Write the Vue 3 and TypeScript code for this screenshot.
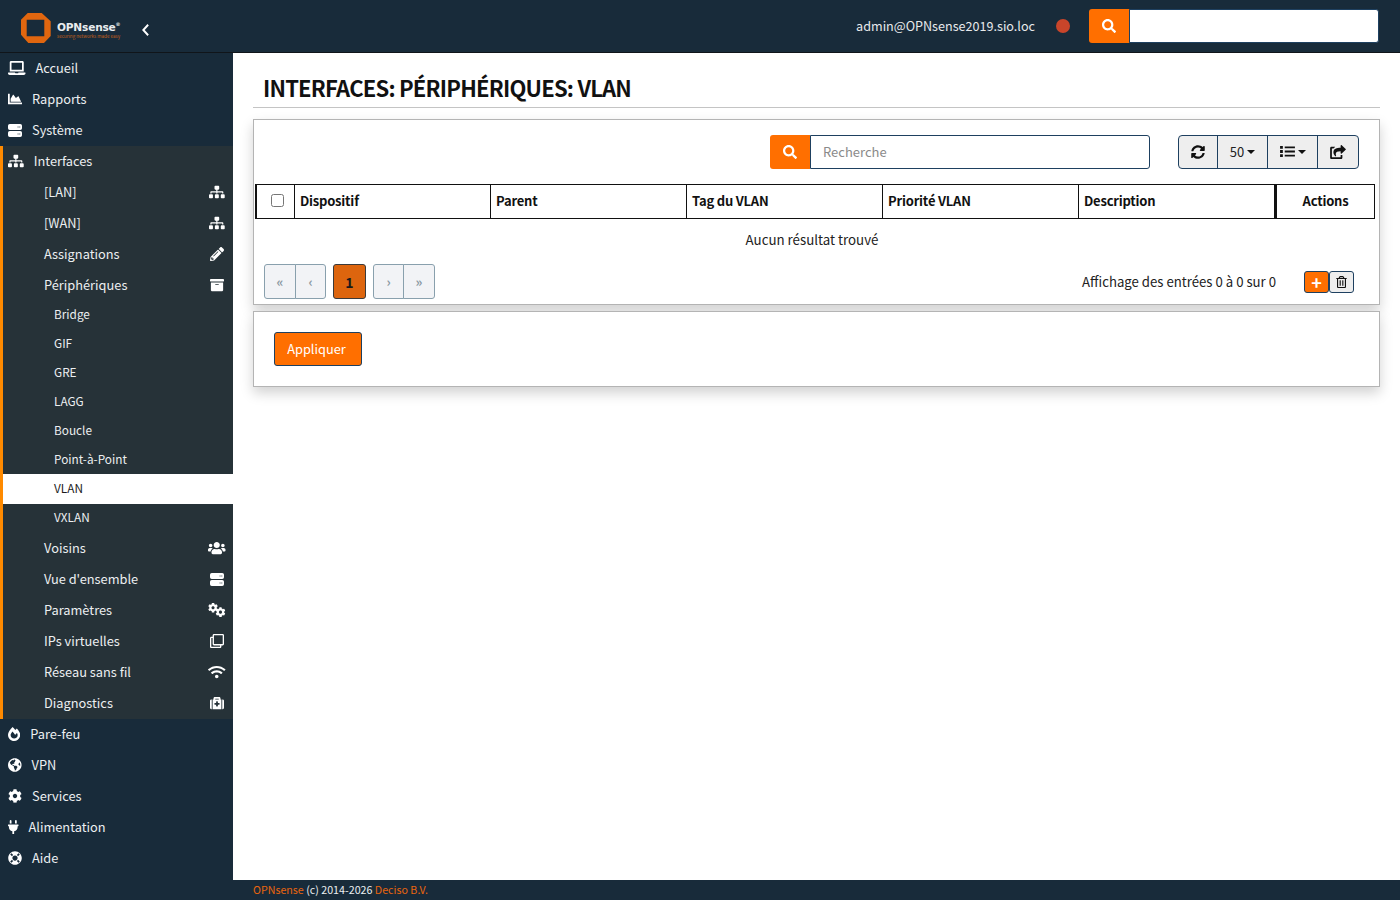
<script setup lang="ts">
interface IconDef {
  vb: string;
  paths: { d: string; t?: string }[];
}

const cog =
  'M487.4 315.7l-42.6-24.6c4.3-23.2 4.3-47 0-70.2l42.6-24.6c4.9-2.8 7.1-8.6 5.5-14-11.1-35.6-30-67.8-54.7-94.6-3.8-4.1-10-5.1-14.8-2.3L380.8 110c-17.9-15.4-38.5-27.3-60.8-35.1V25.8c0-5.6-3.9-10.5-9.4-11.7-36.7-8.2-74.3-7.8-109.2 0-5.5 1.2-9.4 6.1-9.4 11.7V75c-22.2 7.9-42.8 19.8-60.8 35.1L88.7 85.5c-4.9-2.8-11-1.9-14.8 2.3-24.7 26.7-43.6 58.9-54.7 94.6-1.7 5.4.6 11.2 5.5 14L67.3 221c-4.3 23.2-4.3 47 0 70.2l-42.6 24.6c-4.9 2.8-7.1 8.6-5.5 14 11.1 35.6 30 67.8 54.7 94.6 3.8 4.1 10 5.1 14.8 2.3l42.6-24.6c17.9 15.4 38.5 27.3 60.8 35.1v49.2c0 5.6 3.9 10.5 9.4 11.7 36.7 8.2 74.3 7.8 109.2 0 5.5-1.2 9.4-6.1 9.4-11.7v-49.2c22.2-7.9 42.8-19.8 60.8-35.1l42.6 24.6c4.9 2.8 11 1.9 14.8-2.3 24.7-26.7 43.6-58.9 54.7-94.6 1.5-5.5-.7-11.3-5.6-14.1zM256 336c-44.1 0-80-35.9-80-80s35.9-80 80-80 80 35.9 80 80-35.9 80-80 80z';
const server =
  'M2 1h12a2 2 0 0 1 2 2v3a2 2 0 0 1-2 2H2a2 2 0 0 1-2-2V3a2 2 0 0 1 2-2zM2 9h12a2 2 0 0 1 2 2v3a2 2 0 0 1-2 2H2a2 2 0 0 1-2-2v-3a2 2 0 0 1 2-2zM11 4v1h1V4zM13 4v1h1V4zM11 12v1h1v-1zM13 12v1h1v-1z';
const sitemap =
  'M128 352H32c-17.67 0-32 14.33-32 32v96c0 17.67 14.33 32 32 32h96c17.67 0 32-14.33 32-32v-96c0-17.67-14.33-32-32-32zm-24-80h192v48h48v-48h192v48h48v-57.59c0-21.17-17.23-38.41-38.41-38.41H344v-64h40c17.67 0 32-14.33 32-32V32c0-17.67-14.33-32-32-32H256c-17.67 0-32 14.33-32 32v96c0 17.67 14.33 32 32 32h40v64H94.41C73.23 224 56 241.23 56 262.41V320h48v-48zm264 80h-96c-17.67 0-32 14.33-32 32v96c0 17.67 14.33 32 32 32h96c17.67 0 32-14.33 32-32v-96c0-17.67-14.33-32-32-32zm240 0h-96c-17.67 0-32 14.33-32 32v96c0 17.67 14.33 32 32 32h96c17.67 0 32-14.33 32-32v-96c0-17.67-14.33-32-32-32z';

const icons: Record<string, IconDef> = {
  laptop: { vb: '0 0 640 512', paths: [{ d: 'M624 416H381.54c-.74 19.81-14.71 32-32.74 32H288c-18.69 0-33.02-17.47-32.77-32H16c-8.8 0-16 7.2-16 16v16c0 35.2 28.8 64 64 64h512c35.2 0 64-28.8 64-64v-16c0-8.8-7.2-16-16-16zM576 48c0-26.4-21.6-48-48-48H112C85.6 0 64 21.6 64 48v336h512V48zm-64 272H128V64h384v256z' }] },
  chart: { vb: '0 0 512 512', paths: [{ d: 'M500 384c6.6 0 12 5.4 12 12v40c0 6.6-5.4 12-12 12H12c-6.6 0-12-5.4-12-12V76c0-6.6 5.4-12 12-12h40c6.6 0 12 5.4 12 12v308h436zM372.7 159.5L288 216l-85.3-113.7c-5.1-6.8-15.5-6.3-19.9 1L96 248v104h384l-89.9-187.8c-3.2-6.5-11.4-8.7-17.4-4.7z' }] },
  server: { vb: '0 0 16 16', paths: [{ d: server }] },
  sitemap: { vb: '0 -29 640 570', paths: [{ d: sitemap }] },
  pencil: { vb: '0 0 512 512', paths: [{ d: 'M497.9 142.1l-46.1 46.1c-4.7 4.7-12.3 4.7-17 0l-111-111c-4.7-4.7-4.7-12.3 0-17l46.1-46.1c18.7-18.7 49.1-18.7 67.9 0l60.1 60.1c18.8 18.7 18.8 49.1 0 67.9zM284.2 99.8L21.6 362.4.4 483.9c-2.9 16.4 11.4 30.6 27.8 27.8l121.5-21.3 262.6-262.6c4.7-4.7 4.7-12.3 0-17l-111-111c-4.8-4.7-12.4-4.7-17.1 0zM124.1 339.9c-5.5-5.5-5.5-14.3 0-19.8l154-154c5.5-5.5 14.3-5.5 19.8 0s5.5 14.3 0 19.8l-154 154c-5.5 5.5-14.3 5.5-19.8 0zM88 424h48v36.3l-64.5 11.3-31.1-31.1L51.7 376H88v48z' }] },
  archive: { vb: '0 0 512 512', paths: [{ d: 'M32 448c0 17.7 14.3 32 32 32h384c17.7 0 32-14.3 32-32V160H32v288zm160-212c0-6.6 5.4-12 12-12h104c6.6 0 12 5.4 12 12v8c0 6.6-5.4 12-12 12H204c-6.6 0-12-5.4-12-12v-8zM480 32H32C14.3 32 0 46.3 0 64v48c0 8.8 7.2 16 16 16h480c8.8 0 16-7.2 16-16V64c0-17.7-14.3-32-32-32z' }] },
  users: { vb: '0 0 640 512', paths: [{ d: 'M96 224c35.3 0 64-28.7 64-64s-28.7-64-64-64-64 28.7-64 64 28.7 64 64 64zm448 0c35.3 0 64-28.7 64-64s-28.7-64-64-64-64 28.7-64 64 28.7 64 64 64zm32 32h-64c-17.6 0-33.5 7.1-45.1 18.6 40.3 22.1 68.9 62 75.1 109.4h66c17.7 0 32-14.3 32-32v-32c0-35.3-28.7-64-64-64zm-256 0c61.9 0 112-50.1 112-112S381.9 32 320 32 208 82.1 208 144s50.1 112 112 112zm76.8 32h-8.3c-20.8 10-43.9 16-68.5 16s-47.6-6-68.5-16h-8.3C179.6 288 128 339.6 128 403.2V432c0 26.5 21.5 48 48 48h288c26.5 0 48-21.5 48-48v-28.8c0-63.6-51.6-115.2-115.2-115.2zm-223.7-13.4C161.5 263.1 145.6 256 128 256H64c-35.3 0-64 28.7-64 64v32c0 17.7 14.3 32 32 32h65.9c6.3-47.4 34.9-87.3 75.2-109.4z' }] },
  cogs: { vb: '0 0 640 512', paths: [{ d: cog, t: 'translate(0 -12) scale(.72)' }, { d: cog, t: 'translate(272 150) scale(.72)' }] },
  clone: { vb: '0 0 512 512', paths: [{ d: 'M464 0H144c-26.51 0-48 21.49-48 48v48H48c-26.51 0-48 21.49-48 48v320c0 26.51 21.49 48 48 48h320c26.51 0 48-21.49 48-48v-48h48c26.51 0 48-21.49 48-48V48c0-26.51-21.49-48-48-48zM362 464H54a6 6 0 0 1-6-6V150a6 6 0 0 1 6-6h42v224c0 26.51 21.49 48 48 48h224v42a6 6 0 0 1-6 6zm96-96H150a6 6 0 0 1-6-6V54a6 6 0 0 1 6-6h308a6 6 0 0 1 6 6v308a6 6 0 0 1-6 6z' }] },
  wifi: { vb: '0 0 640 512', paths: [{ d: 'M634.91 154.88C457.74-8.99 182.19-8.93 5.09 154.88c-6.66 6.16-6.79 16.59-.35 22.98l34.24 33.97c6.14 6.1 16.02 6.23 22.4.38 145.92-133.68 371.3-133.71 517.25 0 6.38 5.85 16.26 5.71 22.4-.38l34.24-33.97c6.43-6.39 6.3-16.82-.36-22.98zM320 352c-35.35 0-64 28.65-64 64s28.65 64 64 64 64-28.65 64-64-28.65-64-64-64zm202.67-83.59c-115.26-101.93-290.21-101.82-405.34 0-6.9 6.1-7.12 16.69-.57 23.15l34.44 33.99c6 5.92 15.66 6.32 22.05.8 83.95-72.57 209.74-72.41 293.49 0 6.39 5.52 16.05 5.13 22.05-.8l34.44-33.99c6.56-6.46 6.33-17.06-.56-23.15z' }] },
  medkit: { vb: '0 0 512 512', paths: [{ d: 'M96 480h320V128h-32V80c0-26.51-21.49-48-48-48H176c-26.51 0-48 21.49-48 48v48H96v352zm96-384h128v32H192V96zm320 80v256c0 26.51-21.49 48-48 48h-16V128h16c26.51 0 48 21.49 48 48zM64 480H48c-26.51 0-48-21.49-48-48V176c0-26.51 21.49-48 48-48h16v352zm288-208v32c0 8.837-7.163 16-16 16h-48v48c0 8.837-7.163 16-16 16h-32c-8.837 0-16-7.163-16-16v-48h-48c-8.837 0-16-7.163-16-16v-32c0-8.837 7.163-16 16-16h48v-48c0-8.837 7.163-16 16-16h32c8.837 0 16 7.163 16 16v48h48c8.837 0 16 7.163 16 16z' }] },
  fire: { vb: '0 0 448 512', paths: [{ d: 'M323.56 51.2c-20.8 19.3-39.58 39.59-56.22 59.97C240.08 73.62 206.28 35.53 168 0 69.74 91.17 0 209.96 0 281.6 0 408.85 100.29 512 224 512s224-103.15 224-230.4c0-53.27-51.98-163.14-124.44-230.4zm-19.47 340.65C282.43 407.01 255.72 416 226.86 416 154.71 416 96 368.26 96 290.75c0-38.61 24.31-72.63 72.79-130.75 6.93 7.98 98.83 125.34 98.83 125.34l58.63-66.88c4.14 6.85 7.91 13.55 11.27 19.97 27.35 52.19 15.81 118.97-33.43 153.42z' }] },
  globe: { vb: '0 0 496 512', paths: [{ d: 'M248 8C111.03 8 0 119.03 0 256s111.03 248 248 248 248-111.03 248-248S384.97 8 248 8zm82.29 357.6c-3.9 3.88-7.99 7.95-11.31 11.28-2.99 3-5.1 6.7-6.17 10.71-1.51 5.66-2.73 11.38-4.77 16.87l-17.39 46.85c-13.76 3-28 4.69-42.65 4.69v-27.38c1.69-12.62-7.64-36.26-22.63-51.25-6-6-9.37-14.14-9.37-22.63v-32.01c0-11.64-6.27-22.34-16.46-27.97-14.37-7.95-34.81-19.06-48.81-26.11-11.48-5.78-22.1-13.14-31.65-21.75l-.8-.72a114.792 114.792 0 0 1-18.06-20.74c-9.38-13.77-24.66-36.42-34.59-51.14 20.47-45.5 57.36-82.04 103.2-101.89l24.01 12.01C203.48 89.74 216 82.01 216 70.11v-11.3c7.99-1.29 16.12-2.11 24.39-2.42l28.3 28.3c6.25 6.25 6.25 16.38 0 22.63L264 112l-10.34 10.34c-3.13 3.13-3.13 8.19 0 11.31l4.69 4.69c3.13 3.13 3.13 8.19 0 11.31l-8 8a8.008 8.008 0 0 1-5.66 2.34h-8.99c-2.08 0-4.08.81-5.58 2.27l-9.92 9.65a8.008 8.008 0 0 0-1.58 9.31l15.59 31.19c2.66 5.32-1.21 11.58-7.15 11.58h-5.64c-1.93 0-3.79-.7-5.24-1.96l-9.28-8.06a16.017 16.017 0 0 0-15.55-3.1l-31.17 10.39a11.95 11.95 0 0 0-8.17 11.34c0 4.53 2.56 8.66 6.61 10.69l11.08 5.54c9.41 4.71 19.79 7.16 30.31 7.16s22.59 27.29 32 32h66.75c8.49 0 16.62 3.37 22.63 9.37l13.69 13.69a30.503 30.503 0 0 1 8.93 21.57 46.536 46.536 0 0 1-13.72 32.98zM417 274.25c-5.79-1.45-10.84-5-14.15-9.97l-17.98-26.97a23.97 23.97 0 0 1 0-26.62l19.59-29.38c2.32-3.47 5.5-6.29 9.24-8.15l12.98-6.49C440.2 193.59 448 223.87 448 256c0 8.67-.74 17.16-1.82 25.54L417 274.25z' }] },
  cog: { vb: '0 0 512 512', paths: [{ d: cog }] },
  plug: { vb: '0 0 384 512', paths: [{ d: 'M320,32a32,32,0,0,0-64,0v96h64Zm48,128H16A16,16,0,0,0,0,176v32a16,16,0,0,0,16,16H32v32A160.07,160.07,0,0,0,160,412.8V512h64V412.8A160.07,160.07,0,0,0,352,256V224h16a16,16,0,0,0,16-16V176A16,16,0,0,0,368,160ZM128,32a32,32,0,0,0-64,0v96h64Z' }] },
  life: { vb: '0 0 512 512', paths: [{ d: 'M256 8C119 8 8 119 8 256s111 248 248 248 248-111 248-248S393 8 256 8zm173.696 119.559l-63.399 63.399c-10.987-18.559-26.67-34.252-45.255-45.255l63.399-63.399a218.396 218.396 0 0 1 45.255 45.255zM256 352c-53.019 0-96-42.981-96-96s42.981-96 96-96 96 42.981 96 96-42.981 96-96 96zM127.559 82.304l63.399 63.399c-18.559 10.987-34.252 26.67-45.255 45.255l-63.399-63.399a218.372 218.372 0 0 1 45.255-45.255zM82.304 384.441l63.399-63.399c10.987 18.559 26.67 34.252 45.255 45.255l-63.399 63.399a218.396 218.396 0 0 1-45.255-45.255zm302.137 45.255l-63.399-63.399c18.559-10.987 34.252-26.67 45.255-45.255l63.399 63.399a218.403 218.403 0 0 1-45.255 45.255z' }] },
  search: { vb: '0 0 512 512', paths: [{ d: 'M505 442.7L405.3 343c-4.5-4.5-10.6-7-17-7H372c27.6-35.3 44-79.7 44-128C416 93.1 322.9 0 208 0S0 93.1 0 208s93.1 208 208 208c48.3 0 92.7-16.4 128-44v16.3c0 6.4 2.5 12.5 7 17l99.7 99.7c9.4 9.4 24.6 9.4 33.9 0l28.3-28.3c9.4-9.4 9.4-24.6.1-34zM208 336c-70.7 0-128-57.2-128-128 0-70.7 57.2-128 128-128 70.7 0 128 57.2 128 128 0 70.7-57.2 128-128 128z' }] },
  sync: { vb: '0 0 512 512', paths: [{ d: 'M370.72 133.28C339.458 104.008 298.888 87.962 255.848 88c-77.458.068-144.328 53.178-162.791 126.85-1.344 5.363-6.122 9.15-11.651 9.15H24.103c-7.498 0-13.194-6.807-11.807-14.176C33.933 94.924 134.813 8 256 8c66.448 0 126.791 26.136 171.315 68.685L463.03 40.97C478.149 25.851 504 36.559 504 57.941V192c0 13.255-10.745 24-24 24H345.941c-21.382 0-32.09-25.851-16.971-40.971l41.75-41.749zM32 296h134.059c21.382 0 32.09 25.851 16.971 40.971l-41.75 41.75c31.262 29.273 71.835 45.319 114.876 45.28 77.418-.07 144.315-53.144 162.787-126.849 1.344-5.363 6.122-9.15 11.651-9.15h57.304c7.498 0 13.194 6.807 11.807 14.176C478.067 417.076 377.187 504 256 504c-66.448 0-126.791-26.136-171.315-68.685L48.97 471.03C33.851 486.149 8 475.441 8 454.059V320c0-13.255 10.745-24 24-24z' }] },
  list: { vb: '0 0 16 14', paths: [{ d: 'M0 1h3v3H0zM5 1.500h11v2H5zM0 5.500h3v3H0zM5 6h11v2H5zM0 10h3v3H0zM5 10.500h11v2H5z' }] },
  share: { vb: '0 0 576 512', paths: [{ d: 'M568.482 177.448L424.479 313.433C409.3 327.768 384 317.14 384 295.985v-71.963c-144.575.97-205.566 35.113-164.775 171.353 4.483 14.973-12.846 26.567-25.006 17.33C155.252 383.105 120 326.488 120 269.339c0-143.937 117.599-172.5 264-173.312V24.012c0-21.174 25.317-31.768 40.479-17.448l144.003 135.988c10.02 9.463 10.028 25.425 0 34.896zM384 379.128V448H64V128h50.916a11.99 11.99 0 0 0 8.648-3.693c14.953-15.568 32.237-27.89 51.014-37.676C186.708 80.342 182.37 64 168.73 64H48C21.49 64 0 85.49 0 112v352c0 26.51 21.49 48 48 48h352c26.51 0 48-21.49 48-48v-88.806c0-8.288-8.197-13.147-15.999-10.382-11.1 3.934-23.006 5.1-34.69 3.332-6.666-.993-13.311 3.99-13.311 10.984z' }] },
  trash: { vb: '0 0 448 512', paths: [{ d: 'M268 416h24a12 12 0 0 0 12-12V188a12 12 0 0 0-12-12h-24a12 12 0 0 0-12 12v216a12 12 0 0 0 12 12zM432 80h-82.41l-34-56.7A48 48 0 0 0 274.41 0H173.59a48 48 0 0 0-41.16 23.3L98.41 80H16A16 16 0 0 0 0 96v16a16 16 0 0 0 16 16h16v336a48 48 0 0 0 48 48h288a48 48 0 0 0 48-48V128h16a16 16 0 0 0 16-16V96a16 16 0 0 0-16-16zM171.84 50.91A6 6 0 0 1 177 48h94a6 6 0 0 1 5.15 2.91L293.61 80H154.39zM368 464H80V128h288zm-212-48h24a12 12 0 0 0 12-12V188a12 12 0 0 0-12-12h-24a12 12 0 0 0-12 12v216a12 12 0 0 0 12 12z' }] },
};

function vbWidth(name: string): number {
  const parts = icons[name].vb.split(' ').map(Number);
  return (parts[2] / parts[3]) * 14;
}

const topBefore = [
  { label: 'Accueil', icon: 'laptop' },
  { label: 'Rapports', icon: 'chart' },
  { label: 'Système', icon: 'server' },
];
const topAfter = [
  { label: 'Pare-feu', icon: 'fire' },
  { label: 'VPN', icon: 'globe' },
  { label: 'Services', icon: 'cog' },
  { label: 'Alimentation', icon: 'plug' },
  { label: 'Aide', icon: 'life' },
];
const subBefore = [
  { label: '[LAN]', icon: 'sitemap' },
  { label: '[WAN]', icon: 'sitemap' },
  { label: 'Assignations', icon: 'pencil' },
  { label: 'Périphériques', icon: 'archive' },
];
const devices = ['Bridge', 'GIF', 'GRE', 'LAGG', 'Boucle', 'Point-à-Point', 'VLAN', 'VXLAN'];
const subAfter = [
  { label: 'Voisins', icon: 'users' },
  { label: "Vue d'ensemble", icon: 'server' },
  { label: 'Paramètres', icon: 'cogs' },
  { label: 'IPs virtuelles', icon: 'clone' },
  { label: 'Réseau sans fil', icon: 'wifi' },
  { label: 'Diagnostics', icon: 'medkit' },
];
const columns = ['Dispositif', 'Parent', 'Tag du VLAN', 'Priorité VLAN', 'Description'];
</script>

<template>
  <div class="page">
    <header class="topbar">
      <div class="brand">
        <svg class="brand__mark" viewBox="0 0 30 30">
          <path
            fill="#e0660f"
            d="M6.700 0H20.700L29.700 8.300V23L23 30H7.300L0 21.700V6.700zM5.700 6.700V23.300H23.300V6.700z"
          />
        </svg>
        <div class="brand__text">
          <span class="brand__name">OPNsense<sup>®</sup></span>
          <span class="brand__tag">securing networks made easy</span>
        </div>
      </div>
      <svg class="collapse" viewBox="0 0 10 16"><path d="M8 2L2.500 8 8 14" fill="none" stroke="#fff" stroke-width="2.200" /></svg>
      <div class="topbar__right">
        <span class="topbar__user">admin@OPNsense2019.sio.loc</span>
        <span class="topbar__dot"></span>
        <div class="topsearch">
          <span class="search-btn"><svg class="ic15" :viewBox="icons.search.vb"><path :d="icons.search.paths[0].d" /></svg></span>
          <span class="topsearch__field"></span>
        </div>
      </div>
    </header>

    <div class="middle">
      <nav class="side">
        <a v-for="item in topBefore" :key="item.label" class="side__top">
          <svg class="side__icon" :style="{ width: vbWidth(item.icon) + 'px' }" :viewBox="icons[item.icon].vb"><path v-for="(p, i) in icons[item.icon].paths" :key="i" :d="p.d" /></svg>
          <span class="side__label">{{ item.label }}</span>
        </a>
        <div class="side__open">
          <a class="side__top side__top--open">
            <svg class="side__icon" :style="{ width: vbWidth('sitemap') + 'px' }" :viewBox="icons.sitemap.vb"><path :d="icons.sitemap.paths[0].d" /></svg>
            <span class="side__label">Interfaces</span>
          </a>
          <a v-for="item in subBefore" :key="item.label" class="side__sub">
            <span class="side__label">{{ item.label }}</span>
            <span class="side__right"><svg :style="{ width: vbWidth(item.icon) + 'px' }" :viewBox="icons[item.icon].vb"><path v-for="(p, i) in icons[item.icon].paths" :key="i" :d="p.d" /></svg></span>
          </a>
          <a v-for="d in devices" :key="d" class="side__leaf" :class="{ 'side__leaf--active': d === 'VLAN' }"><span class="side__label">{{ d }}</span></a>
          <a v-for="item in subAfter" :key="item.label" class="side__sub">
            <span class="side__label">{{ item.label }}</span>
            <span class="side__right"><svg :style="{ width: vbWidth(item.icon) + 'px' }" :viewBox="icons[item.icon].vb"><path v-for="(p, i) in icons[item.icon].paths" :key="i" :d="p.d" :transform="p.t" /></svg></span>
          </a>
        </div>
        <a v-for="item in topAfter" :key="item.label" class="side__top">
          <svg class="side__icon" :style="{ width: vbWidth(item.icon) + 'px' }" :viewBox="icons[item.icon].vb"><path v-for="(p, i) in icons[item.icon].paths" :key="i" :d="p.d" /></svg>
          <span class="side__label">{{ item.label }}</span>
        </a>
      </nav>

      <main class="content">
        <h1 class="content__title">Interfaces: Périphériques: VLAN</h1>

        <section class="panel panel--grid">
          <div class="toolbar">
            <div class="search">
              <span class="search-btn"><svg class="ic15" :viewBox="icons.search.vb"><path :d="icons.search.paths[0].d" /></svg></span>
              <span class="search__field">Recherche</span>
            </div>
            <div class="btn-group">
              <span class="btn-group__item btn-group__item--icon"><svg class="ic14" :viewBox="icons.sync.vb"><path :d="icons.sync.paths[0].d" /></svg></span>
              <span class="btn-group__item">50<i class="caret"></i></span>
              <span class="btn-group__item"><svg class="ic-list" :viewBox="icons.list.vb"><path :d="icons.list.paths[0].d" /></svg><i class="caret"></i></span>
              <span class="btn-group__item btn-group__item--icon"><svg class="ic-share" :viewBox="icons.share.vb"><path :d="icons.share.paths[0].d" /></svg></span>
            </div>
          </div>

          <table class="grid">
            <thead>
              <tr>
                <th class="grid__check"><span class="checkbox"></span></th>
                <th v-for="c in columns" :key="c" class="grid__col">{{ c }}</th>
                <th class="grid__actions">Actions</th>
              </tr>
            </thead>
            <tbody>
              <tr>
                <td class="grid__empty" colspan="7">Aucun résultat trouvé</td>
              </tr>
            </tbody>
          </table>

          <div class="pager-row">
            <div class="pager">
              <span class="pager__group">
                <span class="pager__btn pager__btn--wide">«</span>
                <span class="pager__btn">‹</span>
              </span>
              <span class="pager__current">1</span>
              <span class="pager__group">
                <span class="pager__btn">›</span>
                <span class="pager__btn pager__btn--wide">»</span>
              </span>
            </div>
            <span class="pager-row__info">Affichage des entrées 0 à 0 sur 0</span>
            <span class="row-actions">
              <span class="row-actions__add">+</span>
              <span class="row-actions__del"><svg viewBox="0 0 448 512"><path :d="icons.trash.paths[0].d" /></svg></span>
            </span>
          </div>
        </section>

        <section class="panel panel--apply">
          <button class="apply" type="button">Appliquer</button>
        </section>
      </main>
    </div>

    <footer class="foot">
      <span class="foot__link">OPNsense</span>&nbsp;(c) 2014-2026&nbsp;<span class="foot__link">Deciso B.V.</span>
    </footer>
  </div>
</template>

<style>
html,
body {
  margin: 0;
  background: #fff;
}
</style>

<style scoped>
.page {
  height: 900px;
  display: flex;
  flex-direction: column;
  overflow: hidden;
  font-family: "Noto Sans CJK SC", "Lato", "Liberation Sans", sans-serif;
  font-size: 13px;
  color: #1c1c1c;
}
svg path {
  fill-rule: evenodd;
}

.topbar {
  height: 52px;
  flex: none;
  display: flex;
  align-items: center;
  background: #182b3a;
  border-bottom: 1px solid #10151a;
  color: #f2f2f2;
}
.brand {
  display: flex;
  align-items: center;
  margin-left: 21px;
  margin-top: 3px;
}
.brand__mark {
  width: 30px;
  height: 30px;
}
.brand__text {
  display: flex;
  flex-direction: column;
  margin-left: 6px;
  padding-top: 5px;
  width: 64px;
}
.brand__name {
  font-family: "DejaVu Sans", sans-serif;
  font-size: 10.600px;
  font-weight: 700;
  line-height: 12px;
  letter-spacing: -0.2px;
  color: #e9ecee;
  white-space: nowrap;
}
.brand__name sup {
  font-size: 5px;
  line-height: 0;
}
.brand__tag {
  font-size: 4.600px;
  line-height: 6px;
  color: #c4601a;
  white-space: nowrap;
}
.collapse {
  width: 9px;
  height: 14px;
  margin-left: 20px;
  margin-top: 8px;
}
.topbar__right {
  margin-left: auto;
  display: flex;
  align-items: center;
  padding-right: 21px;
}
.topbar__user {
  font-size: 12.600px;
  color: #e8eaec;
  position: relative;
  top: -1px;
}
.topbar__dot {
  width: 14px;
  height: 14px;
  border-radius: 50%;
  background: #c9452a;
  margin-left: 21px;
}
.topsearch {
  display: flex;
  margin-left: 19px;
  height: 34px;
}
.search-btn {
  width: 40px;
  display: flex;
  align-items: center;
  justify-content: center;
  background: #ff6f00;
  border-radius: 3px 0 0 3px;
  fill: #fff;
}
.ic15 {
  width: 14px;
  height: 14px;
}
.topsearch__field {
  width: 250px;
  box-sizing: border-box;
  background: #fff;
  border: 1px solid #1e4060;
  border-radius: 0 3px 3px 0;
}

.middle {
  flex: 1;
  min-height: 0;
  display: flex;
}

.side {
  width: 233px;
  flex: none;
  background: #182b3a;
  color: #eceff1;
  fill: #fff;
  font-size: 12.800px;
  display: flex;
  flex-direction: column;
}
.side__top {
  height: 31px;
  flex: none;
  display: flex;
  align-items: center;
  padding-left: 8px;
}
.side__top--open {
  padding-left: 5px;
}
.side__label {
  margin-bottom: 2px;
}
.side__icon {
  height: 14px;
  flex: none;
  margin-right: 10px;
  margin-bottom: 1px;
}
.side__open {
  background: #263238;
  border-left: 3px solid #ff8a00;
  display: flex;
  flex-direction: column;
}
.side__sub {
  height: 31px;
  flex: none;
  display: flex;
  align-items: center;
  justify-content: space-between;
  padding: 0 7px 0 41px;
}
.side__right {
  width: 18px;
  height: 14px;
  display: flex;
  justify-content: center;
  margin-bottom: 2px;
}
.side__right svg {
  height: 14px;
  flex: none;
}
.side__leaf {
  height: 29px;
  flex: none;
  display: flex;
  align-items: center;
  padding-left: 51px;
  font-size: 11.800px;
}
.side__leaf .side__label {
  margin-bottom: 4px;
}
.side__leaf--active {
  height: 30px;
  margin-top: -1px;
  background: #fff;
  color: #1c1c1c;
}

.content {
  flex: 1;
  min-width: 0;
  padding: 0 20px;
}
.content__title {
  margin: 0 0 11px;
  height: 55px;
  box-sizing: border-box;
  padding: 17px 0 0 10px;
  border-bottom: 1px solid #c4c4c4;
  font-size: 22px;
  line-height: 35px;
  font-weight: 700;
  text-transform: uppercase;
  letter-spacing: -0.8px;
  color: #111;
}

.panel {
  border: 1px solid #b4b4b4;
  background: #fff;
  box-shadow: 0 6px 12px rgba(0, 0, 0, 0.18);
}
.panel--grid {
  height: 186px;
  box-sizing: border-box;
  padding: 0 4px 0 1px;
}
.panel--apply {
  margin-top: 6px;
  height: 76px;
  box-sizing: border-box;
  padding: 20px;
}

.toolbar {
  height: 64px;
  display: flex;
  align-items: flex-start;
  padding-top: 15px;
  box-sizing: border-box;
}
.search {
  display: flex;
  height: 34px;
  margin-left: 515px;
}
.search__field {
  width: 340px;
  box-sizing: border-box;
  border: 1px solid #1e4060;
  border-radius: 0 3px 3px 0;
  padding: 0 0 2px 12px;
  display: flex;
  align-items: center;
  color: #8a8a8a;
}
.btn-group {
  display: flex;
  height: 34px;
  margin-left: 28px;
  box-sizing: border-box;
  border: 1px solid #1e4060;
  border-radius: 4px;
  background: #eee;
  overflow: hidden;
}
.btn-group__item {
  display: flex;
  align-items: center;
  justify-content: center;
  box-sizing: border-box;
  width: 50px;
  padding-bottom: 1px;
  border-left: 1px solid #1e4060;
  color: #222;
  fill: #111;
}
.btn-group__item:first-child {
  border-left: none;
}
.btn-group__item--icon {
  width: 41px;
}
.btn-group__item--icon:first-child {
  width: 38px;
}
.ic14 {
  width: 14px;
  height: 14px;
}
.ic-share {
  width: 16px;
  height: 14px;
}
.ic-list {
  width: 15px;
  height: 13px;
}
.caret {
  width: 0;
  height: 0;
  margin-left: 3px;
  border-left: 4px solid transparent;
  border-right: 4px solid transparent;
  border-top: 4px solid #111;
}

.grid {
  width: 1120px;
  border-collapse: separate;
  border-spacing: 0;
  table-layout: fixed;
}
.grid th {
  height: 35px;
  box-sizing: border-box;
  padding: 0 0 2px;
  border-top: 1px solid #111;
  border-bottom: 1px solid #111;
  border-right: 1px solid #111;
  font-weight: 700;
  text-align: left;
  letter-spacing: -0.2px;
  color: #111;
}
.grid th.grid__check {
  width: 40px;
  padding-left: 4px;
  border-left: 2px solid #111;
}
.grid th.grid__col {
  width: 196px;
  padding-left: 5px;
}
.grid th.grid__actions {
  border-left: 2px solid #111;
  text-align: center;
}
.checkbox {
  display: block;
  box-sizing: border-box;
  width: 13px;
  height: 13px;
  border: 1px solid #767676;
  border-radius: 2.500px;
  margin: 0 auto;
}
.grid__empty {
  height: 41px;
  padding: 0 6px 3px 0;
  text-align: center;
  font-size: 13.300px;
  color: #222;
}

.pager-row {
  display: flex;
  align-items: flex-start;
  margin-left: 9px;
  margin-top: 1px;
}
.pager {
  display: flex;
  gap: 7px;
}
.pager__group {
  display: flex;
}
.pager__btn {
  box-sizing: border-box;
  width: 31px;
  height: 35px;
  display: flex;
  align-items: center;
  justify-content: center;
  background: #f2f3f6;
  border: 1px solid #89a0ad;
  color: #8a98a2;
  font-size: 13px;
  font-weight: 700;
}
.pager__btn + .pager__btn {
  margin-left: -1px;
}
.pager__btn--wide {
  width: 32px;
}
.pager__group .pager__btn:first-child {
  border-radius: 3px 0 0 3px;
}
.pager__group .pager__btn:last-child {
  border-radius: 0 3px 3px 0;
}
.pager__current {
  box-sizing: border-box;
  width: 33px;
  height: 35px;
  display: flex;
  align-items: center;
  justify-content: center;
  background: #dd650e;
  border: 1px solid #3a3a3a;
  border-radius: 3px;
  font-weight: 700;
  font-size: 14px;
  color: #1a1a1a;
}
.pager-row__info {
  margin-left: auto;
  margin-top: 8px;
  font-size: 13.200px;
  color: #222;
}
.row-actions {
  display: flex;
  margin: 7px 21px 0 28px;
}
.row-actions__add {
  box-sizing: border-box;
  width: 25px;
  height: 22px;
  display: flex;
  align-items: center;
  justify-content: center;
  background: #ff6f00;
  border: 1px solid #1e4060;
  border-radius: 3px;
  color: #fff;
  font-size: 18px;
  font-weight: 700;
  line-height: 1;
}
.row-actions__del {
  box-sizing: border-box;
  width: 25px;
  height: 22px;
  display: flex;
  align-items: center;
  justify-content: center;
  background: #eee;
  border: 1px solid #1e4060;
  border-radius: 3px;
  fill: #111;
}
.row-actions__del svg {
  width: 11px;
  height: 12px;
}

.apply {
  display: block;
  width: 88px;
  height: 34px;
  padding: 0 3px 2px 0;
  background: #ff6f00;
  border: 1px solid #1e4060;
  border-radius: 3px;
  color: #fff;
  font: inherit;
  font-size: 12.800px;
}

.foot {
  height: 20px;
  flex: none;
  box-sizing: border-box;
  padding-left: 253px;
  background: #182b3a;
  color: #eceff1;
  font-size: 10.700px;
  line-height: 20px;
  display: flex;
}
.foot__link {
  color: #e8650f;
}
</style>
